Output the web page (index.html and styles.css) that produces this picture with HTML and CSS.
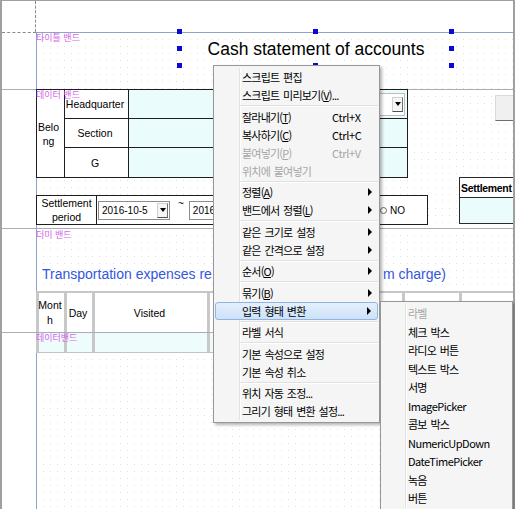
FILE: index.html
```html
<!DOCTYPE html>
<html lang="ko">
<head>
<meta charset="utf-8">
<title>Report designer</title>
<link rel="stylesheet" href="styles.css">
</head>
<body>
<div class="frame">
  <div class="canvas">
    <div class="margin-row"><div class="margin-corner"></div></div>

    <section class="band band-title">
      <div class="gutter"></div>
      <div class="band-body">
        <span class="band-label">타이틀 밴드</span>
        <div class="title-box">
          <span class="title-text">Cash statement of accounts</span>
          <i class="handle h-tl"></i><i class="handle h-tm"></i><i class="handle h-tr"></i>
          <i class="handle h-ml"></i><i class="handle h-mr"></i>
          <i class="handle h-bl"></i><i class="handle h-bm"></i><i class="handle h-br"></i>
        </div>
      </div>
    </section>

    <section class="band band-data">
      <div class="gutter"></div>
      <div class="band-body">
        <div class="belong-table">
          <div class="cell belong"><span>Belong</span></div>
          <div class="cell label">Headquarter</div>
          <div class="cell value"><div class="combo"><span class="combo-btn"><i class="tri"></i></span></div></div>
          <div class="cell label">Section</div>
          <div class="cell value"></div>
          <div class="cell label">G</div>
          <div class="cell value"></div>
        </div>
        <div class="period-row">
          <div class="period-label">Settlement period</div>
          <div class="period-fields">
            <div class="picker"><span class="picker-text">2016-10-5</span><span class="picker-btn"><i class="tri"></i></span></div>
            <span class="tilde">~</span>
            <div class="picker"><span class="picker-text">2016</span><span class="picker-btn"><i class="tri"></i></span></div>
            <span class="radio"><i class="radio-dot"></i>NO</span>
          </div>
        </div>
        <div class="settle-box">
          <div class="settle-head">Settlement</div>
          <div class="settle-cell"></div>
        </div>
        <div class="gray-btn"></div>
        <span class="band-label">데이터 밴드</span>
      </div>
    </section>

    <section class="band band-dummy">
      <div class="gutter"></div>
      <div class="band-body">
        <span class="band-label label-dummy">더미 밴드</span>
        <div class="sub-title"><span class="st-a">Transportation expenses re</span><span class="st-b">m charge)</span></div>
        <div class="grid-row head-row">
          <div class="gcell month"><span>Month</span></div>
          <div class="gcell">Day</div>
          <div class="gcell">Visited</div>
          <div class="gcell"></div>
          <div class="gcell"></div>
          <div class="gcell"></div>
        </div>
      </div>
    </section>

    <section class="band band-data2">
      <div class="gutter"></div>
      <div class="band-body">
        <div class="grid-row data-row">
          <div class="gcell"></div>
          <div class="gcell"></div>
          <div class="gcell"></div>
          <div class="gcell"></div>
          <div class="gcell"></div>
          <div class="gcell"></div>
        </div>
        <span class="band-label">데이터밴드</span>
      </div>
    </section>

    <section class="band band-rest">
      <div class="gutter"></div>
      <div class="band-body"></div>
    </section>
  </div>
</div>

<div class="ctx-menu">
  <div class="mi">스크립트 편집</div>
  <div class="mi">스크립트 미리보기(<u>V</u>)...</div>
  <div class="sep"></div>
  <div class="mi"><span class="lbl">잘라내기(<u>T</u>)</span><span class="sc">Ctrl+X</span></div>
  <div class="mi"><span class="lbl">복사하기(<u>C</u>)</span><span class="sc">Ctrl+C</span></div>
  <div class="mi off"><span class="lbl">붙여넣기(<u>P</u>)</span><span class="sc">Ctrl+V</span></div>
  <div class="mi off">위치에 붙여넣기</div>
  <div class="sep"></div>
  <div class="mi">정렬(<u>A</u>)<i class="arrow"></i></div>
  <div class="mi">밴드에서 정렬(<u>L</u>)<i class="arrow"></i></div>
  <div class="sep"></div>
  <div class="mi">같은 크기로 설정<i class="arrow"></i></div>
  <div class="mi">같은 간격으로 설정<i class="arrow"></i></div>
  <div class="sep"></div>
  <div class="mi">순서(<u>O</u>)<i class="arrow"></i></div>
  <div class="sep"></div>
  <div class="mi">묶기(<u>B</u>)<i class="arrow"></i></div>
  <div class="mi hl">입력 형태 변환<i class="arrow"></i></div>
  <div class="sep"></div>
  <div class="mi">라벨 서식</div>
  <div class="sep"></div>
  <div class="mi">기본 속성으로 설정</div>
  <div class="mi">기본 속성 취소</div>
  <div class="sep"></div>
  <div class="mi">위치 자동 조정...</div>
  <div class="mi">그리기 형태 변환 설정...</div>
</div>

<div class="sub-menu">
  <div class="si off">라벨</div>
  <div class="si">체크 박스</div>
  <div class="si">라디오 버튼</div>
  <div class="si">텍스트 박스</div>
  <div class="si">서명</div>
  <div class="si latin">ImagePicker</div>
  <div class="si">콤보 박스</div>
  <div class="si latin">NumericUpDown</div>
  <div class="si latin">DateTimePicker</div>
  <div class="si">녹음</div>
  <div class="si">버튼</div>
</div>
</body>
</html>
```

FILE: styles.css
```css
* { box-sizing: border-box; }

html, body {
  margin: 0;
  padding: 0;
}

body {
  position: relative;
  width: 515px;
  height: 509px;
  overflow: hidden;
  background: #fff;
  font-family: "Liberation Sans", Arial, sans-serif;
  color: #000;
}

/* ---------- designer frame ---------- */
.frame {
  width: 515px;
  height: 509px;
  border-top: 1px solid #a0a0a0;
  border-left: 2px solid #a0a0a0;
  border-right: 2px solid #a0a0a0;
  overflow: hidden;
  background: #fff;
}

.canvas {
  display: flex;
  flex-direction: column;
  height: 100%;
}

.margin-row {
  height: 31px;
  flex: none;
}

.margin-corner {
  width: 34px;
  height: 100%;
  border-right: 1px dashed #8a8a8a;
}

.band {
  display: flex;
  flex: none;
}

.gutter {
  width: 34px;
  flex: none;
  border-top: 1px solid #a9aeb6;
}

.band-body {
  flex: 1;
  position: relative;
  border-left: 1px solid #8ea4c6;
  border-top: 1px solid #a9aeb6;
  background-color: #fff;
  background-image:
    linear-gradient(90deg, #fff 6px, transparent 6px),
    linear-gradient(#fff 6px, #e2e2e2 6px);
  background-size: 7px 7px;
}

.band-title { height: 57px; }
.band-title .gutter { border-top: 1px dashed #8a8a8a; }
.band-title .band-body { border-top-color: #8da4c8; }
.band-data { height: 139px; }
.band-dummy { height: 104px; }
.band-data2 { height: 21px; }
.band-rest { flex: 1; }
.band-rest .gutter,
.band-rest .band-body { border-top: none; }

.band-label {
  position: absolute;
  left: -1px;
  top: 0;
  z-index: 2;
  font-family: "Noto Sans CJK KR", sans-serif;
  font-size: 9px;
  line-height: 10px;
  color: #d966ea;
  white-space: nowrap;
}

.label-dummy { top: 1px; }

/* ---------- title band ---------- */
.title-box {
  position: absolute;
  left: 143px;
  top: -1px;
  width: 272px;
  height: 34px;
  display: flex;
  align-items: center;
  justify-content: center;
}

.title-text {
  font-size: 17.5px;
  white-space: nowrap;
}

.handle {
  position: absolute;
  width: 5px;
  height: 5px;
  background: #0a0ad2;
}
.h-tl { left: -3px; top: -3px; }
.h-tm { left: 133px; top: -3px; }
.h-tr { left: 269px; top: -3px; }
.h-ml { left: -3px; top: 14px; }
.h-mr { left: 269px; top: 14px; }
.h-bl { left: -3px; top: 31px; }
.h-bm { left: 133px; top: 31px; }
.h-br { left: 269px; top: 31px; }

/* ---------- data band ---------- */
.belong-table {
  position: absolute;
  left: -1px;
  top: -1px;
  width: 372px;
  display: grid;
  grid-template-columns: 28px 64px 279px;
  grid-template-rows: 29px 29px 30px;
  border-left: 1px solid #1e1e1e;
  border-top: 1px solid #1e1e1e;
}

.cell {
  border-right: 1px solid #1e1e1e;
  border-bottom: 1px solid #1e1e1e;
  display: flex;
  align-items: center;
  justify-content: center;
  font-size: 10.5px;
  background: #fff;
}

.cell.label { padding-right: 3px; }

.cell.value {
  background: #eafcfc;
  justify-content: flex-end;
  padding-right: 2px;
}

.cell.belong {
  grid-row: span 3;
  justify-content: flex-start;
}

.belong span {
  display: block;
  width: 23px;
  text-align: center;
  word-break: break-all;
  line-height: 14px;
}

.combo {
  width: 150px;
  height: 23px;
  background: #fff;
  border: 1px solid #bdbdbd;
  display: flex;
  justify-content: flex-end;
  align-items: center;
  padding-right: 1px;
}

.combo-btn,
.picker-btn {
  width: 11px;
  height: 15px;
  flex: none;
  display: flex;
  align-items: center;
  justify-content: center;
  background: #f6f6f6;
  border: 1px solid #d0d0d0;
  border-bottom-color: #505050;
  border-right-color: #707070;
}

.tri {
  width: 0;
  height: 0;
  border-left: 3px solid transparent;
  border-right: 3px solid transparent;
  border-top: 4px solid #000;
}

.period-row {
  position: absolute;
  left: -1px;
  top: 105px;
  width: 392px;
  height: 30px;
  display: flex;
  border: 1px solid #1e1e1e;
  background: #fff;
}

.period-label {
  width: 60px;
  flex: none;
  border-right: 1px solid #1e1e1e;
  display: flex;
  align-items: center;
  justify-content: center;
  text-align: center;
  font-size: 10.5px;
  line-height: 14px;
}

.period-fields {
  flex: 1;
  display: flex;
  align-items: center;
  padding-left: 1px;
  padding-right: 22px;
}

.picker {
  width: 72px;
  height: 19px;
  flex: none;
  display: flex;
  align-items: center;
  justify-content: space-between;
  background: #fff;
  border: 1px solid #8c8c8c;
  padding: 0 1px 0 3px;
  font-size: 10px;
  overflow: hidden;
}

.picker-text { white-space: nowrap; }

.tilde {
  align-self: flex-start;
  margin: 3px 5px 0 8px;
  font-size: 10px;
  line-height: 10px;
}

.radio {
  margin-left: auto;
  display: flex;
  align-items: center;
  gap: 3px;
  font-size: 10px;
}

.radio-dot {
  width: 7px;
  height: 7px;
  border: 1px solid #6a6a6a;
  border-radius: 50%;
}

.settle-box {
  position: absolute;
  left: 422px;
  top: 87px;
  width: 80px;
  height: 47px;
  border: 1px solid #2a2a2a;
  background: #fff;
}

.settle-head {
  height: 20px;
  border-bottom: 1px solid #2a2a2a;
  padding-left: 1px;
  display: flex;
  align-items: center;
  font-size: 10.5px;
  font-weight: bold;
  letter-spacing: -0.3px;
  white-space: nowrap;
}

.settle-cell {
  height: 25px;
  background: #eafcfc;
}

.gray-btn {
  position: absolute;
  left: 458px;
  top: 5px;
  width: 40px;
  height: 26px;
  background: #f0f0f0;
  border: 1px solid #dadada;
  border-bottom-color: #6e6e6e;
}

/* ---------- dummy band ---------- */
.sub-title {
  position: absolute;
  left: 5px;
  top: 36px;
  width: 404px;
  display: flex;
  justify-content: space-between;
  font-size: 14px;
  line-height: 18px;
  color: #3457dc;
  white-space: nowrap;
}

.grid-row {
  position: absolute;
  left: -1px;
  display: grid;
  grid-template-columns: 28px 28px 115px 195px 57px 100px;
}

.head-row {
  top: 62px;
  height: 41px;
  border-top: 2px solid #c6c6c6;
}

.data-row {
  top: 0;
  height: 20px;
  border-bottom: 1px solid #c0c4c8;
}

.gcell {
  border-left: 3px solid #c8c8c8;
  padding-right: 3px;
  display: flex;
  align-items: center;
  justify-content: center;
  font-size: 10.5px;
  background: #fff;
}

.data-row .gcell { background: #eefcfc; }

.gcell.month {
  padding-right: 0;
}

.month span {
  display: block;
  width: 26px;
  margin-left: -3px;
  text-align: center;
  word-break: break-all;
  line-height: 15px;
}

/* ---------- context menus ---------- */
.ctx-menu,
.sub-menu {
  position: absolute;
  z-index: 10;
  background: #f5f5f5;
  border: 1px solid #979797;
  box-shadow: 2px 2px 3px rgba(0, 0, 0, 0.3);
  font-family: "Noto Sans CJK KR", sans-serif;
  font-size: 11px;
  color: #000;
}

.ctx-menu {
  left: 213px;
  top: 65px;
  width: 167px;
  padding: 2px 1px;
}

.sub-menu {
  left: 380px;
  top: 301px;
  width: 133px;
  padding: 2px 1px;
}

.ctx-menu::before,
.sub-menu::before {
  content: "";
  position: absolute;
  top: 2px;
  bottom: 2px;
  width: 1px;
  background: #e2e3e3;
  box-shadow: 1px 0 0 #fff;
}
.ctx-menu::before { left: 25px; }
.sub-menu::before { left: 24px; }

.mi,
.si {
  position: relative;
  display: flex;
  align-items: center;
  padding-left: 27px;
  letter-spacing: -0.8px;
  word-spacing: 1.5px;
  white-space: nowrap;
}

.mi { height: 18px; }
.si { height: 18.5px; padding-left: 26px; }

.mi.off,
.si.off { color: #a6a6a6; }

.si.latin {
  letter-spacing: -0.5px;
  font-size: 11px;
}

.mi .lbl { width: 90px; }

.mi .sc {
  letter-spacing: -0.3px;
  font-size: 11px;
}

.mi.hl {
  background: linear-gradient(#e4effc, #cde2f9);
  border: 1px solid #8fb5e3;
  border-radius: 3px;
  padding-left: 26px;
  z-index: 1;
}

.arrow {
  position: absolute;
  right: 6px;
  top: 50%;
  margin-top: -4px;
  width: 0;
  height: 0;
  border-left: 4px solid #000;
  border-top: 4px solid transparent;
  border-bottom: 4px solid transparent;
}

.sep {
  height: 3.5px;
  margin-left: 25px;
  position: relative;
}

.sep::after {
  content: "";
  position: absolute;
  left: 0;
  right: 0;
  top: 1px;
  height: 1px;
  background: #e0e0e0;
  box-shadow: 0 1px 0 #fff;
}
```
